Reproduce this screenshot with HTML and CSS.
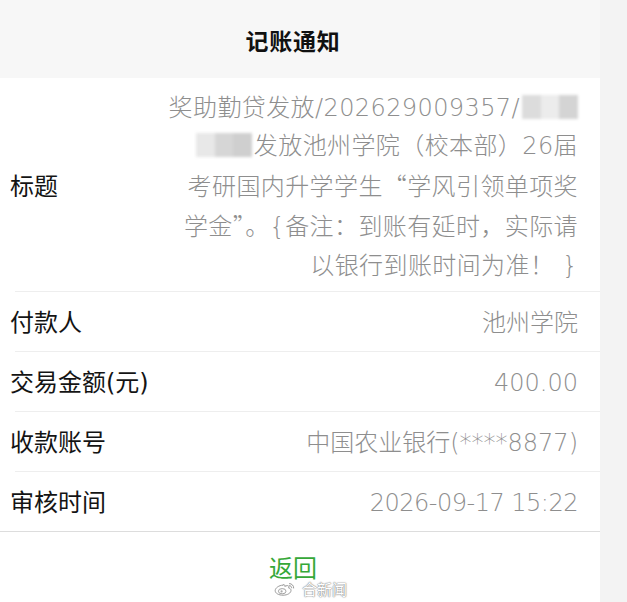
FILE: index.html
```html
<!DOCTYPE html>
<html lang="zh-CN">
<head>
<meta charset="utf-8">
<title>记账通知</title>
<link rel="stylesheet" href="styles.css">
</head>
<body>
<div class="page">
  <header class="bar">
    <h1 class="bar-title">记账通知</h1>
  </header>
  <section class="list">
    <div class="row row-tall">
      <span class="label">标题</span>
      <div class="value value-multi">
        <div class="line">奖助勤贷发放/202629009357/<span class="mosaic m1"><i></i><i></i><i></i></span></div>
        <div class="line"><span class="mosaic m2"><i></i><i></i><i></i></span>发放池州学院（校本部）26届</div>
        <div class="line">考研国内升学学生<span class="cjk">“</span>学风引领单项奖</div>
        <div class="line">学金<span class="cjk">”</span>。{备注：到账有延时，实际请</div>
        <div class="line">以银行到账时间为准！ }</div>
      </div>
    </div>
    <div class="row">
      <span class="label">付款人</span>
      <span class="value">池州学院</span>
    </div>
    <div class="row">
      <span class="label">交易金额(元)</span>
      <span class="value">400.00</span>
    </div>
    <div class="row">
      <span class="label">收款账号</span>
      <span class="value">中国农业银行(****8877)</span>
    </div>
    <div class="row row-last">
      <span class="label">审核时间</span>
      <span class="value value-date">2026-09-17 15:22</span>
    </div>
  </section>
  <footer class="foot">
    <span class="back">返回</span>
    <div class="watermark">
      <svg class="wb" width="22" height="14" viewBox="0 0 22 14">
        <path d="M9 3.2C5 3.2 1.2 6 1.2 8.6c0 2.8 3.6 4.6 7.8 4.6 4.6 0 8-2.2 8-4.8 0-1.6-1.4-2.2-2.4-2.4.6-1.2.4-2.4-1.2-2.4-1 0-2 .6-2.6.8.4-1.2-.2-2-1.8-1.6z" fill="#fff" stroke="#999" stroke-width="1"/>
        <ellipse cx="8.2" cy="9.2" rx="3.8" ry="2.6" fill="#fff" stroke="#999" stroke-width="0.9"/>
        <circle cx="7.6" cy="9.4" r="1.1" fill="#aaa"/>
        <path d="M15.5 1.6a4 4 0 0 1 4.2 4.4M15.5 3.6a2 2 0 0 1 2.2 2.2" fill="none" stroke="#999" stroke-width="1" stroke-linecap="round"/>
      </svg>
      <span class="wm-text">合新闻</span>
    </div>
  </footer>
</div>
</body>
</html>
```

FILE: styles.css
```css
* { box-sizing: border-box; }

html, body {
  margin: 0;
  padding: 0;
}

body {
  background: #f3f3f3;
  font-family: "DejaVu Sans", "Noto Sans CJK SC", sans-serif;
  width: 627px;
  height: 602px;
  overflow: hidden;
}

.page {
  width: 600px;
  height: 602px;
  background: #ffffff;
  display: flex;
  flex-direction: column;
}

.bar {
  height: 78px;
  background: #f7f7f7;
  display: flex;
  align-items: center;
  justify-content: center;
  padding: 2px 14px 0 0;
}

.bar-title {
  margin: 0;
  font-family: "Noto Sans CJK SC", sans-serif;
  font-size: 23px;
  font-weight: 700;
  color: #111;
  letter-spacing: 0.8px;
}

.list {
  display: flex;
  flex-direction: column;
}

.row {
  height: 60px;
  display: flex;
  align-items: center;
  justify-content: space-between;
  padding: 0 22px 0 10px;
  background: linear-gradient(#eeeeee, #eeeeee) no-repeat 15px 100% / calc(100% - 15px) 1px;
}

.row-tall {
  height: 214px;
  padding-top: 2px;
}

.row-last {
  background: linear-gradient(#dddddd, #dddddd) no-repeat 0 100% / 100% 1px;
}

.label {
  font-size: 24px;
  color: #141414;
  line-height: 1;
  padding-top: 2px;
}

.value {
  font-size: 24px;
  font-weight: 300;
  color: #8e8e8e;
  line-height: 1;
  padding-top: 2px;
}

.value-date {
  letter-spacing: -0.5px;
}

.value-multi {
  display: flex;
  flex-direction: column;
  align-items: flex-end;
  line-height: 38.5px;
  text-align: right;
  letter-spacing: 0.4px;
}

.line {
  white-space: nowrap;
}

.cjk {
  font-family: "Noto Sans CJK SC", sans-serif;
}

.mosaic {
  display: inline-flex;
  vertical-align: middle;
  height: 24px;
  filter: blur(1.5px);
  margin-top: -4px;
}

.mosaic i {
  display: block;
  flex: 1;
  height: 100%;
}

.m1 { width: 56px; margin-left: 2px; }
.m1 i:nth-child(1) { background: #dcdcdc; }
.m1 i:nth-child(2) { background: #ececec; }
.m1 i:nth-child(3) { background: #d4d4d4; }

.m2 { width: 56px; margin-right: 2px; }
.m2 i:nth-child(1) { background: #e8e8e8; }
.m2 i:nth-child(2) { background: #d6d6d6; }
.m2 i:nth-child(3) { background: #cfcfcf; }

.foot {
  flex: 1;
  display: flex;
  flex-direction: column;
  align-items: center;
  padding: 23px 14px 0 0;
  position: relative;
}

.back {
  font-family: "Noto Sans CJK SC", sans-serif;
  font-size: 24px;
  color: #36a838;
  line-height: 1;
}

.watermark {
  position: absolute;
  left: 274px;
  top: 49px;
  display: flex;
  align-items: center;
  gap: 6px;
}

.wm-text {
  font-family: "Noto Sans CJK SC", sans-serif;
  font-size: 15px;
  color: #ffffff;
  line-height: 1;
  text-shadow: 0 0 1px #8a8a8a, 0 0 1px #8a8a8a, 0 0 2px #aaaaaa;
}
```
